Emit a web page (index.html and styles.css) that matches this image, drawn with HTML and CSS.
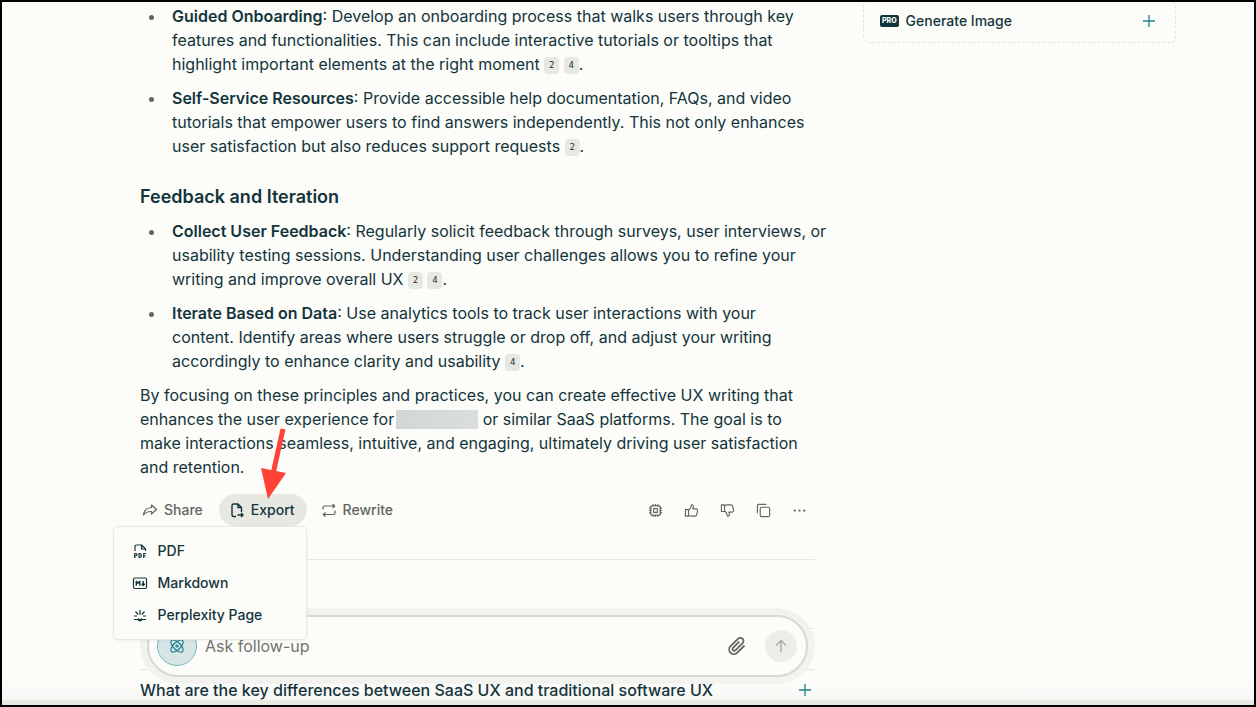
FILE: index.html
```html
<!DOCTYPE html>
<html lang="en">
<head>
  <meta charset="UTF-8" />
  <meta name="viewport" content="width=device-width, initial-scale=1.0"/>
  <title>UX Writing for SaaS</title>
  <link rel="stylesheet" href="styles.css">
</head>
<body>

<div class="page">
  <main class="thread">
    <article class="answer">
      <ul>
        <li><strong>Guided Onboarding</strong>: Develop an onboarding process that walks users through key<br>features and functionalities. This can include interactive tutorials or tooltips that<br>highlight important elements at the right moment <a class="cite" href="#source-2">2</a> <a class="cite" href="#source-4">4</a>.</li>
        <li><strong>Self-Service Resources</strong>: Provide accessible help documentation, FAQs, and video<br>tutorials that empower users to find answers independently. This not only enhances<br>user satisfaction but also reduces support requests <a class="cite" href="#source-2">2</a>.</li>
      </ul>

      <h2>Feedback and Iteration</h2>
      <ul>
        <li><strong>Collect User Feedback</strong>: Regularly solicit feedback through surveys, user interviews, or<br>usability testing sessions. Understanding user challenges allows you to refine your<br>writing and improve overall UX <a class="cite" href="#source-2">2</a> <a class="cite" href="#source-4">4</a>.</li>
        <li><strong>Iterate Based on Data</strong>: Use analytics tools to track user interactions with your<br>content. Identify areas where users struggle or drop off, and adjust your writing<br>accordingly to enhance clarity and usability <a class="cite" href="#source-4">4</a>.</li>
      </ul>

      <p>By focusing on these principles and practices, you can create effective UX writing that<br>enhances the user experience for<span class="redacted"></span> or similar SaaS platforms. The goal is to<br>make interactions seamless, intuitive, and engaging, ultimately driving user satisfaction<br>and retention.</p>
    </article>

    <div class="toolbar">
      <div class="actions">
        <button class="action" type="button">
          <svg class="icon" viewBox="0 0 16 16"><path d="M9.5 3 L14.5 7.5 L9.5 12 V9.5 C6 9.3 3.5 10.3 1.5 13 C2 8.5 5 5.8 9.5 5.5 Z"/></svg>
          Share
        </button>
        <div class="export">
          <button class="action active" type="button" aria-expanded="true">
            <svg class="icon" viewBox="0 0 16 16"><path class="bold" d="M7 14.5 H4.5 Q3 14.5 3 13 V3.5 Q3 2 4.5 2 H9 L12.5 5.5 V10 M9 2 V5.5 H12.5 M8.5 13 H14 M12 11 L14 13 L12 15"/></svg>
            Export
          </button>
          <div class="menu">
            <button class="menu-item" type="button">
              <svg class="icon" viewBox="0 0 16 16"><path d="M3 8 V3.5 Q3 2 4.5 2 H9.5 L13.5 6 V8 M9.5 2 V6 H13.5"/><path d="M2.7 15 V10.5 H4 Q5 10.5 5 11.5 T4 12.8 H2.7 M7 10.5 V14.3 H8 Q9.3 14 9.3 12.4 T8 10.5 Z M11.7 15 V10.5 H14.2 M11.7 12.8 H13.5"/></svg>
              PDF
            </button>
            <button class="menu-item" type="button">
              <svg class="icon" viewBox="0 0 16 16"><rect x="1.5" y="3" width="13" height="10.5" rx="1.5"/><path class="bold" d="M4.3 10.7 V6.3 L6 8.2 L7.8 6.3 V10.7 M11.2 6 V10 M9.7 8.8 L11.2 10.5 L12.7 8.8"/></svg>
              Markdown
            </button>
            <button class="menu-item" type="button">
              <svg class="icon" viewBox="0 0 16 16"><path d="M8 3 V8 M3.5 4.5 L6.2 7.5 M12.5 4.5 L9.8 7.5 M2 9 H5 M11 9 H14 M2 12.5 H5.5 L8 14 L10.5 12.5 H14 M6 11.5 L8 13.5 L10 11.5"/></svg>
              Perplexity Page
            </button>
          </div>
        </div>
        <button class="action" type="button">
          <svg class="icon" viewBox="0 0 16 16"><path d="M2 7.5 V5.5 Q2 4 3.5 4 H13.5 M11.5 2 L13.7 4 L11.5 6 M14 8.5 V11 Q14 12.5 12.5 12.5 H2.5 M4.5 10.5 L2.3 12.5 L4.5 14.5"/></svg>
          Rewrite
        </button>
      </div>
      <div class="tools">
        <button class="tool" type="button" aria-label="Model"><svg class="icon" viewBox="0 0 16 16"><rect class="bold" x="3" y="3" width="10" height="10" rx="1"/><rect x="6" y="6" width="4" height="4"/><path d="M5.5 3 V1 M8 3 V1 M10.5 3 V1 M5.5 15 V13 M8 15 V13 M10.5 15 V13 M3 5.5 H1 M3 8 H1 M3 10.5 H1 M15 5.5 H13 M15 8 H13 M15 10.5 H13"/></svg></button>
        <button class="tool" type="button" aria-label="Good answer"><svg class="icon" viewBox="0 0 16 16"><path d="M1.5 7 H4.8 V14 H1.5 Z M4.8 7.5 C7 6.5 7.5 4.5 7.8 2.5 C8 1.5 10 1.7 10 3.5 C10 4.7 9.7 5.5 9.4 6.3 H13 Q14.7 6.5 14.4 8.3 L13.6 12.5 Q13.3 14 11.8 14 H8 Q6.5 14 4.8 13"/></svg></button>
        <button class="tool" type="button" aria-label="Bad answer"><svg class="icon flip" viewBox="0 0 16 16"><path d="M1.5 7 H4.8 V14 H1.5 Z M4.8 7.5 C7 6.5 7.5 4.5 7.8 2.5 C8 1.5 10 1.7 10 3.5 C10 4.7 9.7 5.5 9.4 6.3 H13 Q14.7 6.5 14.4 8.3 L13.6 12.5 Q13.3 14 11.8 14 H8 Q6.5 14 4.8 13"/></svg></button>
        <button class="tool" type="button" aria-label="Copy"><svg class="icon" viewBox="0 0 16 16"><rect x="4.5" y="4.5" width="10" height="10" rx="1.5"/><path d="M1.5 11 V3 Q1.5 1.5 3 1.5 H11"/></svg></button>
        <button class="tool" type="button" aria-label="More"><svg class="icon dots" viewBox="0 0 16 16"><circle cx="3" cy="8" r="1.2"/><circle cx="8" cy="8" r="1.2"/><circle cx="13" cy="8" r="1.2"/></svg></button>
      </div>
    </div>

    <section class="related">
      <a class="question" href="#related-1" aria-label="Related question"></a>
      <a class="question" href="#related-2">
        What are the key differences between SaaS UX and traditional software UX
        <svg class="plus" viewBox="0 0 14 14"><path d="M7 1 V13 M1 7 H13"/></svg>
      </a>
    </section>

    <div class="composer">
      <form class="ask">
        <span class="avatar">
          <svg class="icon" viewBox="0 0 16 16"><ellipse cx="8" cy="8" rx="8" ry="3.6" transform="rotate(45 8 8)"/><ellipse cx="8" cy="8" rx="8" ry="3.6" transform="rotate(-45 8 8)"/><circle cx="8" cy="8" r="1"/></svg>
        </span>
        <input type="text" aria-label="Ask follow-up" placeholder="Ask follow-up">
        <button class="attach" type="button" aria-label="Attach"><svg viewBox="0 0 20 20"><path d="M17.5 9.5 L10.3 16.7 A4.5 4.5 0 0 1 3.5 10.2 L11 2.8 A3.1 3.1 0 0 1 15.6 7.2 L8.6 14.2 A1.6 1.6 0 0 1 6 11.8 L12.3 5.6"/></svg></button>
        <button class="send" type="button" aria-label="Send"><svg viewBox="0 0 14 14"><path d="M7 13 V1.5 M2 6.5 L7 1.5 L12 6.5"/></svg></button>
      </form>
    </div>
  </main>

  <aside>
    <button class="generate" type="button">
      <span class="pro">PRO</span>
      <span class="label">Generate Image</span>
      <svg class="plus" viewBox="0 0 14 14"><path d="M7 1 V13 M1 7 H13"/></svg>
    </button>
  </aside>
</div>

<svg class="arrow" viewBox="0 0 30 74"><path d="M24 3 L14 48"/><polygon points="2,42 27,47 9,73"/></svg>
<div class="fade"></div>
<div class="frame"></div>

</body>
</html>
```

FILE: styles.css
```css
* {
  box-sizing: border-box;
}

html, body {
  height: 100%;
  margin: 0;
  padding: 0;
  overflow: hidden;
}

body {
  font-family: Inter, 'Liberation Sans', sans-serif;
  font-size: 16px;
  line-height: 24px;
  color: #13343b;
  background: #fcfcf9;
}

button, input {
  font: inherit;
  color: inherit;
  border: none;
  background: none;
  padding: 0;
}

button {
  cursor: pointer;
}

a {
  color: inherit;
  text-decoration: none;
}

svg {
  fill: none;
  stroke: currentColor;
  flex: none;
}

.page {
  display: grid;
  grid-template-columns: minmax(0, 675fr) minmax(0, 313fr);
  grid-template-rows: 100%;
  gap: 48px;
  height: 100%;
  padding: 0 80px 0 140px;
}

.thread {
  position: relative;
  z-index: 1;
  padding-top: 4px;
  white-space: nowrap;
}

/* Answer text */
.answer ul {
  margin: 0;
  padding-left: 32px;
  list-style: none;
}

.answer li {
  margin-bottom: 10px;
}

.answer li::before {
  content: "";
  display: inline-block;
  width: 5px;
  height: 5px;
  margin: 0 18px 0 -23px;
  border-radius: 50%;
  background: #64645f;
  vertical-align: middle;
}

.answer strong {
  font-weight: 600;
}

.answer h2 {
  margin: 27px 0 10px;
  font-size: 18px;
  line-height: 24px;
  font-weight: 600;
}

.answer p {
  margin: 0;
}

.cite {
  display: inline-block;
  min-width: 15px;
  height: 17px;
  border-radius: 4px;
  background: #e8e8e3;
  font-family: 'DejaVu Sans Mono', monospace;
  font-size: 9px;
  line-height: 17px;
  text-align: center;
  vertical-align: middle;
}

.redacted {
  display: inline-block;
  width: 82px;
  height: 19px;
  margin-left: 2px;
  vertical-align: -4px;
  background: linear-gradient(to right, #d2d7d6, #dadedd);
}

/* Buttons under the answer */
.toolbar {
  display: flex;
  justify-content: space-between;
  align-items: center;
  margin-top: 15px;
  padding-bottom: 33px;
  border-bottom: 1px solid #e8e8e3;
}

.actions, .tools {
  display: flex;
  align-items: center;
}

.actions {
  gap: 4px;
}

.action {
  display: flex;
  align-items: center;
  gap: 6px;
  height: 32px;
  padding: 0 12px 0 10px;
  border-radius: 16px;
  font-size: 14px;
  font-weight: 500;
  color: #64645f;
}

.action:first-child {
  padding-left: 2px;
}

.action.active {
  padding-left: 10px;
  background: #e8e8e3;
  color: #13343b;
}

.icon {
  width: 16px;
  height: 16px;
  stroke-width: 1.2;
  stroke-linejoin: round;
}

.icon .bold {
  stroke-width: 1.4;
}

.tool {
  display: flex;
  align-items: center;
  justify-content: center;
  width: 36px;
  height: 32px;
  color: #64645f;
}

.tools {
  margin-right: -2px;
}

.tool .icon {
  width: 15px;
  height: 15px;
}

.flip {
  transform: scaleY(-1);
}

.dots {
  fill: currentColor;
  stroke: none;
}

.export {
  position: relative;
}

.menu {
  position: absolute;
  z-index: 3;
  top: 32px;
  right: 0;
  width: 194px;
  padding: 8px;
  background: #fcfcf9;
  border: 1px solid #e8e8e3;
  border-radius: 5px;
  box-shadow: 0 1px 3px rgba(0, 0, 0, 0.06);
}

.menu-item {
  display: flex;
  align-items: center;
  gap: 10px;
  width: 100%;
  height: 32px;
  padding: 0 10px;
  font-size: 14px;
  font-weight: 500;
}

/* Related questions */
.related {
  padding-top: 68px;
}

.question {
  display: flex;
  align-items: center;
  justify-content: space-between;
  height: 41px;
  padding-right: 3px;
  border-top: 1px solid #e8e8e3;
  font-weight: 500;
}

.plus {
  width: 14px;
  height: 14px;
  color: #20808d;
  stroke-width: 1.3;
}

/* Follow-up box */
.composer {
  position: absolute;
  z-index: 2;
  left: 0;
  right: 0;
  bottom: 23px;
  padding: 7px;
  border-radius: 38px;
  background: #f2f2ee;
}

.ask {
  display: flex;
  align-items: center;
  height: 62px;
  padding: 0 9px 0 8px;
  border: 2px solid #d9d9d0;
  border-radius: 31px;
  background: #fcfcf9;
}

.avatar {
  display: flex;
  align-items: center;
  justify-content: center;
  width: 40px;
  height: 40px;
  border: 1px solid #7fb6bd;
  border-radius: 50%;
  background: #d6e5e5;
  color: #20808d;
}

.ask input {
  flex: 1;
  min-width: 0;
  margin-left: 8px;
  outline: none;
}

.ask input::placeholder {
  color: #73736e;
  opacity: 1;
}

.attach svg {
  display: block;
  width: 20px;
  height: 20px;
  color: #64645f;
  stroke-width: 1.8;
}

.send {
  display: flex;
  align-items: center;
  justify-content: center;
  width: 32px;
  height: 32px;
  margin-left: 18px;
  border-radius: 50%;
  background: #ededea;
  color: #a9a9a5;
}

.send svg {
  width: 14px;
  height: 14px;
  stroke-width: 1.4;
}

/* Side card */
.generate {
  display: flex;
  align-items: center;
  gap: 7px;
  width: 100%;
  height: 43px;
  padding: 0 19px 2px 16px;
  border: 1px dashed #e3e3de;
  border-radius: 6px;
  font-size: 14px;
  font-weight: 500;
}

.generate .label {
  flex: 1;
  text-align: left;
}

.pro {
  padding: 0 2px;
  border-radius: 2px;
  background: #13343b;
  color: #fcfcf9;
  font-size: 7px;
  line-height: 12px;
  font-weight: 800;
}

/* Pointer to the export button */
.arrow {
  position: absolute;
  z-index: 4;
  left: 259px;
  top: 426px;
  width: 30px;
  height: 74px;
  stroke: #ff4136;
  stroke-width: 5;
}

.arrow polygon {
  fill: #ff4136;
  stroke: none;
}

.fade {
  position: absolute;
  left: 0;
  right: 0;
  bottom: 0;
  height: 27px;
  border-bottom: 7px solid #e9e9e3;
  background: linear-gradient(to bottom, transparent, rgba(240, 240, 240, 0.4));
  background-clip: padding-box;
}

.frame {
  position: absolute;
  z-index: 5;
  inset: 0;
  border: 2px solid #000;
  pointer-events: none;
}
```
